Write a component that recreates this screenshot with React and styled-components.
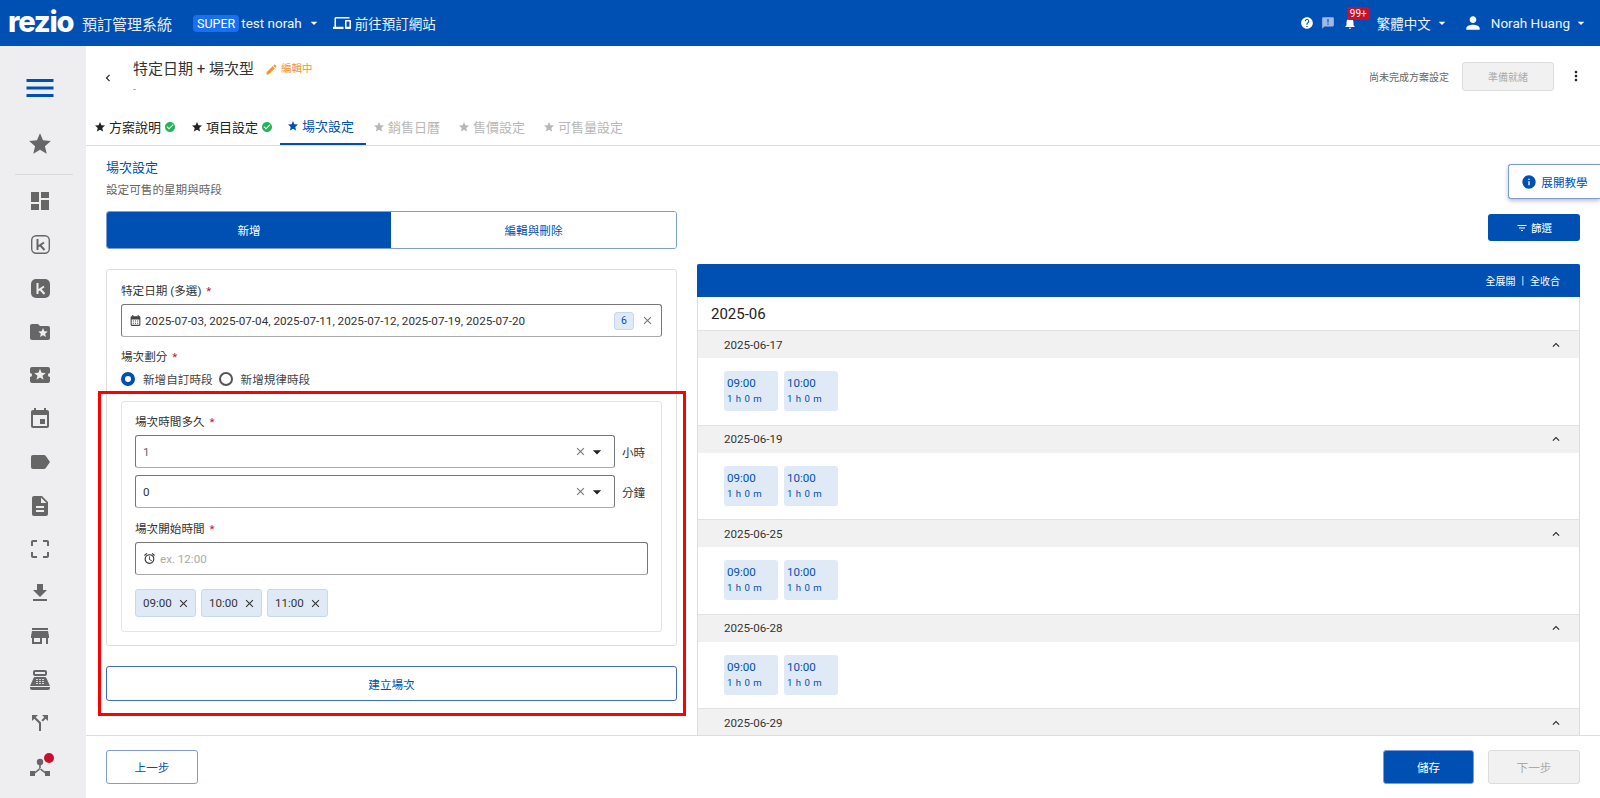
import styled, { createGlobalStyle } from 'styled-components';
import {
  MdMenu, MdStar, MdDashboard, MdFolderSpecial, MdLocalActivity, MdEvent, MdLabel, MdDescription,
  MdCropFree, MdFileDownload, MdStore, MdPointOfSale, MdCallSplit, MdDevices, MdHelp, MdAnnouncement,
  MdNotifications, MdPerson, MdArrowDropDown, MdCheckCircle, MdEdit, MdChevronLeft, MdMoreVert, MdClose,
  MdAccessAlarm, MdInfo, MdFilterList, MdExpandLess, MdCalendarMonth,
} from 'react-icons/md';

const BLUE = '#0050b3';

const GlobalStyle = createGlobalStyle`
  html, body { margin: 0; padding: 0; background: #fff; }
  body { font-family: Roboto, "Noto Sans CJK TC", sans-serif; color: #222; overflow: hidden; }
  * { box-sizing: border-box; }
`;

const Page = styled.div`
  width: 1600px;
  height: 798px;
  display: flex;
  flex-direction: column;
  overflow: hidden;
`;

const TopBar = styled.header`
  height: 46px;
  flex: none;
  background: ${BLUE};
  color: #fff;
  display: flex;
  align-items: center;
  padding: 0 11px 0 8px;
  font-size: 13.5px;
`;
const Logo = styled.span`
  font-family: Inter, sans-serif;
  font-weight: 800;
  font-size: 29px;
  letter-spacing: -1.2px;
  line-height: 1;
  width: 74px;
  margin-top: -4px;
`;
const SystemName = styled.span`
  font-size: 15px;
  color: #e8effa;
  width: 111px;
`;
const SuperBadge = styled.span`
  background: #1a6ff0;
  border-radius: 4px;
  padding: 0 4px;
  height: 17px;
  line-height: 17px;
  font-size: 12.5px;
  margin-right: 2px;
`;
const TopText = styled.span`
  font-size: ${p => p.$size || 13.5}px;
  color: #eef3fb;
  display: flex;
  align-items: center;
  margin-left: ${p => p.$left || 0}px;
`;
const Spacer = styled.div`
  flex: 1;
`;
const TopIcon = styled.span`
  display: flex;
  position: relative;
  margin-right: ${p => p.$right || 0}px;
  margin-left: ${p => p.$left || 0}px;
  color: ${p => p.$color || 'inherit'};
`;
const CountBadge = styled.span`
  position: absolute;
  top: -9px;
  left: 4px;
  background: #c8102e;
  border-radius: 2px;
  font-size: 10px;
  line-height: 13px;
  height: 13px;
  padding: 0 3px;
  color: #fff;
`;

const Body = styled.div`
  flex: 1;
  display: flex;
  min-height: 0;
`;

const Sidebar = styled.nav`
  width: 86px;
  flex: none;
  background: #eeeef1;
  color: #666;
  display: flex;
  flex-direction: column;
  align-items: stretch;
  padding-top: 24px;
`;
const SideItem = styled.div`
  height: ${p => p.$h || 43.5}px;
  flex: none;
  display: flex;
  align-items: center;
  justify-content: center;
  padding-right: 6px;
  position: relative;
  margin-top: ${p => p.$top || 0}px;
  color: ${p => p.$color || '#666'};
`;
const SideRule = styled.div`
  height: 1px;
  flex: none;
  background: #d8d8da;
  margin: 7px 13px 4.5px 15px;
`;
const HubDot = styled.span`
  position: absolute;
  top: 8px;
  left: 44px;
  width: 10px;
  height: 10px;
  border-radius: 50%;
  background: #c8102e;
`;

const Main = styled.main`
  flex: 1;
  min-width: 0;
  display: flex;
  flex-direction: column;
`;
const TitleRow = styled.div`
  height: 54px;
  flex: none;
  display: flex;
  padding: 13px 16px 0 15px;
`;
const BackCell = styled.div`
  width: 32px;
  padding-top: 11px;
  color: #222;
`;
const TitleBlock = styled.div`
  flex: 1;
`;
const TitleLine = styled.div`
  display: flex;
  align-items: center;
  font-size: 15px;
  line-height: 20px;
  color: #333;
`;
const Editing = styled.span`
  display: flex;
  align-items: center;
  gap: 3px;
  color: #f6922a;
  font-size: 10.5px;
  margin-left: 11px;
`;
const Dash = styled.div`
  font-size: 10px;
  color: #999;
  margin-top: 5px;
`;
const HeadActions = styled.div`
  display: flex;
  align-items: center;
  height: 30px;
  margin-top: 2px;
`;
const HeadNote = styled.span`
  font-size: 10px;
  color: #666;
  margin-right: 13px;
`;
const ReadyButton = styled.div`
  width: 92px;
  height: 29px;
  background: #f1f1f1;
  border: 1px solid #dcdcdc;
  border-radius: 3px;
  color: #aaa;
  font-size: 10px;
  display: flex;
  align-items: center;
  justify-content: center;
  margin-right: 14px;
`;

const Tabs = styled.div`
  height: 46px;
  flex: none;
  display: flex;
  padding: 8px 0 0 8px;
  border-bottom: 1px solid #ddd;
`;
const Tab = styled.div`
  height: 37px;
  width: ${p => p.$w}px;
  flex: none;
  display: flex;
  align-items: center;
  gap: 3px;
  padding-left: ${p => p.$pad || 0}px;
  padding-top: ${p => (p.$active ? 0 : 2)}px;
  font-size: 13px;
  color: ${p => (p.$active ? BLUE : p.$muted ? '#b8b8b8' : '#222')};
  border-bottom: 2px solid ${p => (p.$active ? BLUE : 'transparent')};
  margin-right: ${p => p.$gap || 0}px;
`;

const Content = styled.div`
  flex: 1;
  min-height: 0;
  display: flex;
  gap: 20px;
  padding: 0 20px;
  overflow: hidden;
  position: relative;
`;
const LeftCol = styled.div`
  width: 571px;
  flex: none;
  position: relative;
  padding-top: 14px;
`;
const SectionTitle = styled.div`
  font-size: 13px;
  line-height: 16px;
  color: ${BLUE};
`;
const SectionSub = styled.div`
  font-size: 11.6px;
  line-height: 16px;
  color: #666;
  margin-top: 6px;
`;
const Segment = styled.div`
  margin-top: 13px;
  height: 38px;
  display: flex;
  border: 1px solid #7f9bd6;
  border-radius: 3px;
  overflow: hidden;
  font-size: 11.6px;
`;
const SegItem = styled.div`
  width: ${p => p.$w}px;
  flex: ${p => (p.$w ? 'none' : 1)};
  display: flex;
  align-items: center;
  justify-content: center;
  background: ${p => (p.$on ? BLUE : '#fff')};
  color: ${p => (p.$on ? '#fff' : BLUE)};
`;
const FormCard = styled.div`
  margin-top: 20px;
  height: 377px;
  border: 1px solid #dedede;
  border-radius: 3px;
  padding: 13px 14px 0;
`;
const Label = styled.div`
  font-size: 11.6px;
  line-height: 16px;
  color: #333;
  margin-top: ${p => p.$top || 0}px;
  & b {
    color: #c8102e;
    font-weight: 400;
    margin-left: 2px;
  }
`;
const Field = styled.div`
  height: 33px;
  width: ${p => p.$w ? `${p.$w}px` : 'auto'};
  flex: ${p => (p.$w ? 'none' : 1)};
  border: 1px solid #777;
  border-bottom-color: #aaa;
  border-radius: 3px;
  display: flex;
  align-items: center;
  padding: 0 7px;
  margin-top: ${p => p.$top || 0}px;
  font-size: 11.6px;
  color: #444;
`;
const FieldValue = styled.span`
  flex: 1;
  margin-left: ${p => p.$left || 0}px;
  font-size: ${p => p.$size || 11.6}px;
  color: ${p => p.$color || '#333'};
`;
const CountChip = styled.span`
  width: 20px;
  height: 18px;
  background: #e0eaf7;
  border: 1px solid #c5d8f0;
  border-radius: 3px;
  color: ${BLUE};
  font-size: 10.5px;
  display: flex;
  align-items: center;
  justify-content: center;
  margin-right: 7px;
`;
const RadioRow = styled.div`
  display: flex;
  align-items: center;
  font-size: 11.6px;
  color: #444;
  margin-top: 6px;
  height: 16px;
`;
const Radio = styled.span`
  width: 14px;
  height: 14px;
  border-radius: 50%;
  border: ${p => (p.$on ? `4px solid ${BLUE}` : '2px solid #555')};
  margin-right: 8px;
`;
const RadioText = styled.span`
  margin-right: 6px;
`;
const InnerCard = styled.div`
  margin-top: 14px;
  height: 231px;
  border: 1px solid #e4e4e4;
  border-radius: 3px;
  padding: 12px 13px;
`;
const SelectRow = styled.div`
  display: flex;
  align-items: center;
  margin-top: ${p => p.$top}px;
  font-size: 11.6px;
  color: #333;
`;
const Unit = styled.span`
  margin-left: 7px;
`;
const Chips = styled.div`
  display: flex;
  gap: 5px;
  margin-top: 14px;
`;
const Chip = styled.div`
  width: 61px;
  height: 28px;
  background: #e0eaf7;
  border: 1px solid #c5d8f0;
  border-radius: 3px;
  display: flex;
  align-items: center;
  justify-content: space-between;
  padding: 0 5px 0 7px;
  font-size: 11.6px;
  color: #333;
`;
const CreateButton = styled.div`
  margin-top: 20px;
  height: 35px;
  border: 1px solid #3c6cc4;
  border-radius: 3px;
  display: flex;
  align-items: center;
  justify-content: center;
  font-size: 11.6px;
  color: ${BLUE};
`;
const RedMark = styled.div`
  position: absolute;
  left: -8px;
  top: 245px;
  width: 588px;
  height: 325px;
  border: 3px solid #f00;
  pointer-events: none;
`;

const RightCol = styled.div`
  flex: 1;
  min-width: 0;
  padding-top: 68px;
`;
const FilterRow = styled.div`
  display: flex;
  justify-content: flex-end;
`;
const FilterButton = styled.div`
  width: 92px;
  height: 27px;
  background: ${BLUE};
  border-radius: 3px;
  color: #fff;
  font-size: 10.5px;
  display: flex;
  align-items: center;
  justify-content: center;
  gap: 3px;
`;
const TutorialButton = styled.div`
  position: absolute;
  right: 0;
  top: 18px;
  width: 92px;
  height: 35px;
  background: #fff;
  border: 1px solid #7f9bd6;
  border-right: none;
  border-radius: 3px 0 0 3px;
  box-shadow: 0 2px 4px rgba(0, 0, 0, 0.25);
  color: ${BLUE};
  font-size: 11.6px;
  display: flex;
  align-items: center;
  justify-content: center;
  gap: 4px;
`;
const Schedule = styled.div`
  margin-top: 23px;
  border-left: 1px solid #ddd;
  border-right: 1px solid #ddd;
`;
const ScheduleHead = styled.div`
  height: 33px;
  margin: 0 -1px;
  background: ${BLUE};
  border-radius: 2px 2px 0 0;
  color: #fff;
  font-size: 10px;
  display: flex;
  align-items: center;
  justify-content: flex-end;
  gap: 6px;
  padding-right: 20px;
`;
const MonthRow = styled.div`
  height: 33px;
  display: flex;
  align-items: center;
  padding-left: 13px;
  font-size: 15px;
  color: #222;
`;
const DateGroup = styled.section`
  height: 94.5px;
`;
const DateHead = styled.div`
  height: 28px;
  background: #f1f1f1;
  border-top: 1px solid #e2e2e2;
  display: flex;
  align-items: center;
  justify-content: space-between;
  padding: 0 16px 0 26px;
  font-size: 11.6px;
  color: #333;
`;
const Slots = styled.div`
  display: flex;
  gap: 6px;
  padding: 13px 26px 0;
`;
const Slot = styled.div`
  width: 54px;
  height: 40px;
  background: #e0eaf7;
  border-radius: 3px;
  color: ${BLUE};
  padding: 5px 0 0 3px;
  font-size: 11.6px;
  line-height: 15px;
  & small {
    display: block;
    font-size: 9.6px;
    line-height: 15px;
    letter-spacing: 0.5px;
  }
`;

const Footer = styled.footer`
  height: 63px;
  flex: none;
  border-top: 1px solid #ddd;
  background: #fff;
  display: flex;
  align-items: flex-start;
  padding: 14px 20px 0;
  gap: 14px;
`;
const FootButton = styled.div`
  width: ${p => p.$w || 91}px;
  height: 34px;
  border-radius: 3px;
  display: flex;
  align-items: center;
  justify-content: center;
  font-size: 11.6px;
  background: ${p => (p.$kind === 'primary' ? BLUE : p.$kind === 'off' ? '#f1f1f1' : '#fff')};
  color: ${p => (p.$kind === 'primary' ? '#fff' : p.$kind === 'off' ? '#aaa' : BLUE)};
  border: 1px solid ${p => (p.$kind === 'off' ? '#dcdcdc' : '#7f9bd6')};
`;

function KeyIcon({ filled }) {
  return (
    <svg width="21" height="21" viewBox="0 0 21 21">
      {filled ? (
        <rect x="1" y="1" width="19" height="19" rx="5" fill="#666" />
      ) : (
        <rect x="1.7" y="1.7" width="17.6" height="17.6" rx="4.5" fill="none" stroke="#666" strokeWidth="1.4" />
      )}
      <path d="M7.5 5v11M14 8.5l-6 4M10 11l4.5 5" fill="none" stroke={filled ? '#eee' : '#666'} strokeWidth="2" />
    </svg>
  );
}

function HubIcon() {
  return (
    <svg width="22" height="22" viewBox="0 0 22 22" fill="#666">
      <circle cx="11" cy="6" r="3.2" />
      <path d="M10.2 8h1.6v5h-1.6zM10.6 12l1 1.2-5.6 4.4-1-1.2zM11.4 12l-1 1.2 5.6 4.4 1-1.2z" />
      <rect x="1" y="15" width="5" height="5" />
      <rect x="16" y="15" width="5" height="5" />
    </svg>
  );
}

const dates = [
  { day: '2025-06-17', times: ['09:00', '10:00'] },
  { day: '2025-06-19', times: ['09:00', '10:00'] },
  { day: '2025-06-25', times: ['09:00', '10:00'] },
  { day: '2025-06-28', times: ['09:00', '10:00'] },
  { day: '2025-06-29', times: [] },
];

function App() {
  return (
    <Page>
      <GlobalStyle />
      <TopBar>
        <Logo>rezio</Logo>
        <SystemName>預訂管理系統</SystemName>
        <SuperBadge>SUPER</SuperBadge>
        <TopText>test norah</TopText>
        <MdArrowDropDown size={16} style={{ marginLeft: 4 }} />
        <TopIcon $left={11} $right={4}><MdDevices size={18} /></TopIcon>
        <TopText>前往預訂網站</TopText>
        <Spacer />
        <TopIcon $right={7.5}><MdHelp size={14} /></TopIcon>
        <TopIcon $right={7.5} $color="#9db9e4"><MdAnnouncement size={14} /></TopIcon>
        <TopIcon $right={20}><MdNotifications size={14} /><CountBadge>99+</CountBadge></TopIcon>
        <TopText>繁體中文</TopText>
        <MdArrowDropDown size={16} style={{ marginLeft: 3 }} />
        <TopIcon $left={13} $right={8}><MdPerson size={20} /></TopIcon>
        <TopText>Norah Huang</TopText>
        <MdArrowDropDown size={16} style={{ marginLeft: 3 }} />
      </TopBar>
      <Body>
        <Sidebar>
          <SideItem $h={36} $color={BLUE}><MdMenu size={36} /></SideItem>
          <SideItem $h={46} $top={15}><MdStar size={26} /></SideItem>
          <SideRule />
          <SideItem><MdDashboard size={24} /></SideItem>
          <SideItem><KeyIcon /></SideItem>
          <SideItem><KeyIcon filled /></SideItem>
          <SideItem><MdFolderSpecial size={24} /></SideItem>
          <SideItem><MdLocalActivity size={24} /></SideItem>
          <SideItem><MdEvent size={24} /></SideItem>
          <SideItem><MdLabel size={24} /></SideItem>
          <SideItem><MdDescription size={24} /></SideItem>
          <SideItem><MdCropFree size={24} /></SideItem>
          <SideItem><MdFileDownload size={24} /></SideItem>
          <SideItem><MdStore size={24} /></SideItem>
          <SideItem><MdPointOfSale size={24} /></SideItem>
          <SideItem><MdCallSplit size={24} /></SideItem>
          <SideItem><HubIcon /><HubDot /></SideItem>
        </Sidebar>
        <Main>
          <TitleRow>
            <BackCell><MdChevronLeft size={14} /></BackCell>
            <TitleBlock>
              <TitleLine>
                特定日期 + 場次型
                <Editing><MdEdit size={13} />編輯中</Editing>
              </TitleLine>
              <Dash>-</Dash>
            </TitleBlock>
            <HeadActions>
              <HeadNote>尚未完成方案設定</HeadNote>
              <ReadyButton>準備就緒</ReadyButton>
              <MdMoreVert size={16} />
            </HeadActions>
          </TitleRow>
          <Tabs>
            <Tab $w={97}><MdStar size={12} />方案說明<MdCheckCircle size={12} color="#22b455" /></Tab>
            <Tab $w={89}><MdStar size={12} />項目設定<MdCheckCircle size={12} color="#22b455" /></Tab>
            <Tab $w={86} $pad={7} $active $gap={7}><MdStar size={12} />場次設定</Tab>
            <Tab $w={85} $muted><MdStar size={12} />銷售日曆</Tab>
            <Tab $w={85} $muted><MdStar size={12} />售價設定</Tab>
            <Tab $w={96} $muted><MdStar size={12} />可售量設定</Tab>
          </Tabs>
          <Content>
            <LeftCol>
              <SectionTitle>場次設定</SectionTitle>
              <SectionSub>設定可售的星期與時段</SectionSub>
              <Segment>
                <SegItem $on $w={284}>新增</SegItem>
                <SegItem>編輯與刪除</SegItem>
              </Segment>
              <FormCard>
                <Label>特定日期 (多選)<b> *</b></Label>
                <Field $top={5}>
                  <MdCalendarMonth size={13} />
                  <FieldValue $left={3} $size={11.7}>2025-07-03, 2025-07-04, 2025-07-11, 2025-07-12, 2025-07-19, 2025-07-20</FieldValue>
                  <CountChip>6</CountChip>
                  <MdClose size={13} color="#777" />
                </Field>
                <Label $top={12}>場次劃分<b> *</b></Label>
                <RadioRow>
                  <Radio $on />
                  <RadioText>新增自訂時段</RadioText>
                  <Radio />
                  <RadioText>新增規律時段</RadioText>
                </RadioRow>
                <InnerCard>
                  <Label>場次時間多久<b> *</b></Label>
                  <SelectRow $top={5}>
                    <Field $w={480}>
                      <FieldValue $color="#666">1</FieldValue>
                      <MdClose size={13} color="#777" />
                      <MdArrowDropDown size={20} color="#222" />
                    </Field>
                    <Unit>小時</Unit>
                  </SelectRow>
                  <SelectRow $top={7}>
                    <Field $w={480}>
                      <FieldValue>0</FieldValue>
                      <MdClose size={13} color="#777" />
                      <MdArrowDropDown size={20} color="#222" />
                    </Field>
                    <Unit>分鐘</Unit>
                  </SelectRow>
                  <Label $top={13}>場次開始時間<b> *</b></Label>
                  <Field $top={5}>
                    <MdAccessAlarm size={13} color="#333" />
                    <FieldValue $left={4} $color="#aaa">ex. 12:00</FieldValue>
                  </Field>
                  <Chips>
                    {['09:00', '10:00', '11:00'].map(t => (
                      <Chip key={t}>{t}<MdClose size={13} /></Chip>
                    ))}
                  </Chips>
                </InnerCard>
              </FormCard>
              <CreateButton>建立場次</CreateButton>
              <RedMark />
            </LeftCol>
            <RightCol>
              <FilterRow>
                <FilterButton><MdFilterList size={12} />篩選</FilterButton>
              </FilterRow>
              <Schedule>
                <ScheduleHead>全展開<span>|</span>全收合</ScheduleHead>
                <MonthRow>2025-06</MonthRow>
                {dates.map(d => (
                  <DateGroup key={d.day}>
                    <DateHead>{d.day}<MdExpandLess size={14} color="#222" /></DateHead>
                    {d.times.length > 0 && (
                      <Slots>
                        {d.times.map(t => (
                          <Slot key={t}>{t}<small>1 h 0 m</small></Slot>
                        ))}
                      </Slots>
                    )}
                  </DateGroup>
                ))}
              </Schedule>
            </RightCol>
            <TutorialButton><MdInfo size={16} />展開教學</TutorialButton>
          </Content>
          <Footer>
            <FootButton $w={92}>上一步</FootButton>
            <Spacer />
            <FootButton $kind="primary">儲存</FootButton>
            <FootButton $kind="off" $w={92}>下一步</FootButton>
          </Footer>
        </Main>
      </Body>
    </Page>
  );
}

export default App;
